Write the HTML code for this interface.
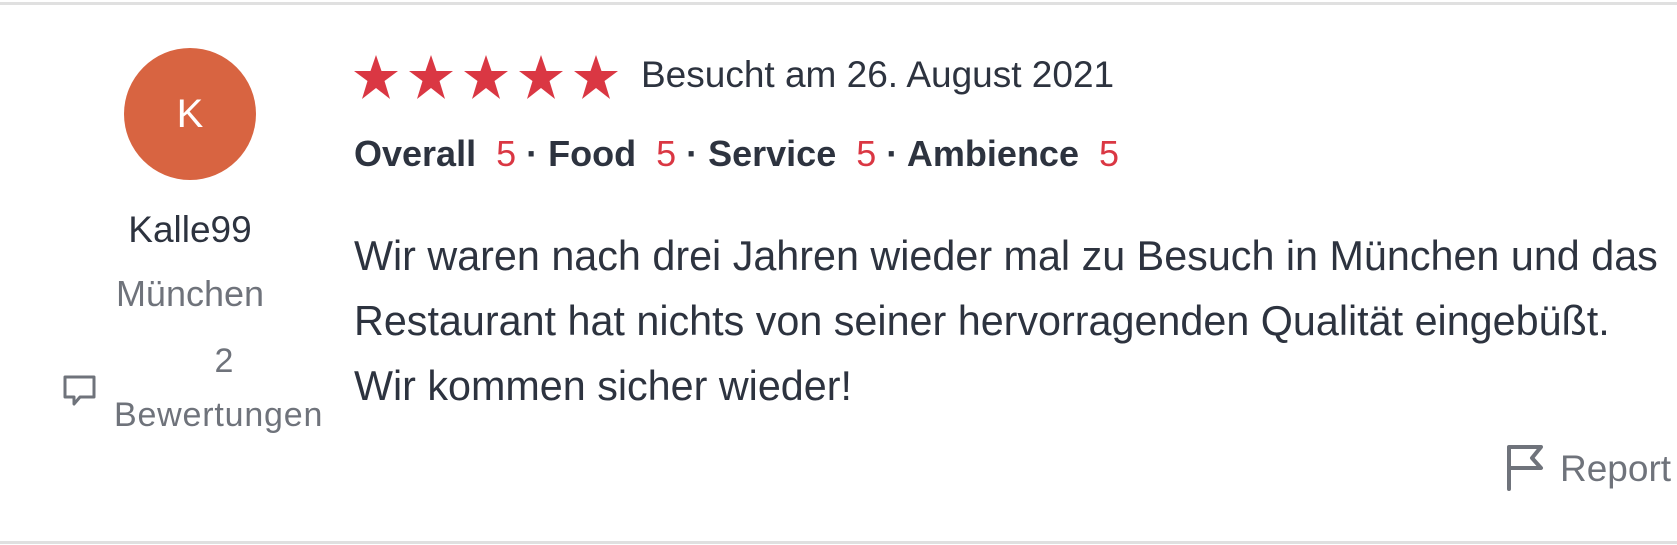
<!DOCTYPE html>
<html><head><meta charset="utf-8"><style>
html,body{margin:0;padding:0;background:#fff;width:1677px;height:545px;overflow:hidden;font-family:"Liberation Sans",sans-serif;color:#2d333f}
.b{position:absolute;left:0;width:1677px;height:3px;background:#e0e0e0}
.a{position:absolute;left:124px;top:48px;width:132px;height:132px;border-radius:50%;background:#d86441;color:#fff;font-size:40px;text-align:center;line-height:132px}
.t{position:absolute;white-space:nowrap}
.g{color:#6f737b}
.r{color:#da3743}
</style></head><body>
<div class="b" style="top:2px"></div>
<div class="b" style="top:541px"></div>
<div class="a">K</div>
<div class="t" style="left:0;width:380px;text-align:center;top:209px;font-size:37px">Kalle99</div>
<div class="t g" style="left:0;width:380px;text-align:center;top:273px;font-size:36px">München</div>
<div class="t g" style="left:114px;width:220px;text-align:center;top:342px;font-size:34px">2</div>
<div class="t g" style="left:114px;top:396px;font-size:34px;letter-spacing:0.8px">Bewertungen</div>
<svg style="position:absolute;left:62px;top:374px" width="36" height="34" viewBox="0 0 36 34"><path d="M3 3H32V23H18L12 30V23H3Z" fill="none" stroke="#6f737b" stroke-width="3" stroke-linejoin="round"/></svg>
<svg style="position:absolute;left:354px;top:55px" width="270" height="46" viewBox="0 0 270 46">
<g fill="#da3743">
<path id="s" d="M22 0L27.5 16H44L30.5 26L36 44L22 33L8 44L13.5 26L0 16H16.5Z"/>
<use href="#s" x="55"/><use href="#s" x="110"/><use href="#s" x="165"/><use href="#s" x="220"/>
</g></svg>
<div class="t" style="left:641px;top:54px;font-size:37px">Besucht am 26. August 2021</div>
<div class="t" style="left:354px;top:133px;font-size:36px;font-weight:bold">Overall&nbsp; <span class="r" style="font-weight:normal">5</span> · Food&nbsp; <span class="r" style="font-weight:normal">5</span> · Service&nbsp; <span class="r" style="font-weight:normal">5</span> · Ambience&nbsp; <span class="r" style="font-weight:normal">5</span></div>
<div class="t" style="left:354px;top:224px;font-size:41.3px;line-height:65px">Wir waren nach drei Jahren wieder mal zu Besuch in München und das<br>Restaurant hat nichts von seiner hervorragenden Qualität eingebüßt.<br>Wir kommen sicher wieder!</div>
<svg style="position:absolute;left:1504px;top:444px" width="42" height="48" viewBox="0 0 42 48"><path d="M5 45V3H37L28 14L37 24H5" fill="none" stroke="#6f737b" stroke-width="4" stroke-linejoin="round" stroke-linecap="round"/></svg>
<div class="t g" style="left:1560px;top:448px;font-size:37px">Report</div>
</body></html>
